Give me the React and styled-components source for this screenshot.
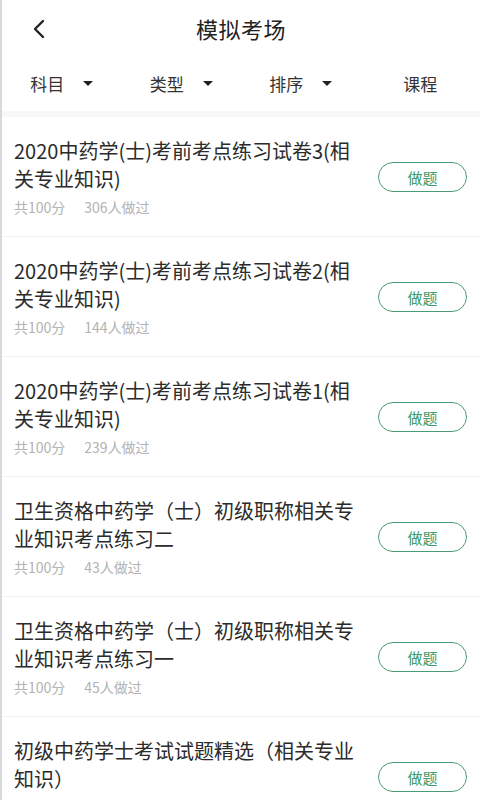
import styled, { createGlobalStyle } from 'styled-components';

const GlobalStyle = createGlobalStyle`
  html, body {
    margin: 0;
    padding: 0;
    background: #ffffff;
  }
  body {
    font-family: "Noto Sans CJK SC", "Noto Sans", sans-serif;
  }
`;

const Page = styled.div`
  width: 480px;
  height: 800px;
  overflow: hidden;
  box-sizing: border-box;
  border-left: 2px solid #d9d9d9;
  background: #ffffff;
`;

const Header = styled.div`
  display: flex;
  align-items: center;
  justify-content: center;
  position: relative;
  height: 56px;
`;

const BackButton = styled.div`
  position: absolute;
  left: 26px;
  top: 18px;
  width: 22px;
  height: 22px;
  display: flex;
  align-items: center;
  justify-content: center;
`;

const Title = styled.h1`
  margin: 0;
  font-size: 22px;
  font-weight: 400;
  color: #222;
  letter-spacing: 0.5px;
`;

const FilterBar = styled.div`
  display: flex;
  height: 55px;
  align-items: center;
  border-bottom: 6px solid #f7f7f7;
`;

const FilterItem = styled.div`
  flex: 1;
  display: flex;
  align-items: center;
  justify-content: center;
  font-size: 17px;
  color: #333;
`;

const Caret = styled.span`
  margin-left: 19px;
  width: 0;
  height: 0;
  border-left: 5px solid transparent;
  border-right: 5px solid transparent;
  border-top: 5px solid #222;
`;

const List = styled.div`
  display: flex;
  flex-direction: column;
`;

const Item = styled.div`
  display: flex;
  align-items: center;
  justify-content: space-between;
  padding: 20px 13px 19px 12px;
  border-bottom: 1px solid #f3f3f3;
`;

const Info = styled.div`
  width: 346px;
`;

const ItemTitle = styled.div`
  font-size: 20px;
  line-height: 28px;
  color: #2b2b2b;
`;

const Meta = styled.div`
  margin-top: 4px;
  display: flex;
  gap: 19px;
  font-size: 14px;
  line-height: 20px;
  color: #b3b3b3;
`;

const DoButton = styled.button`
  width: 89px;
  height: 30px;
  border: 1.5px solid #4a9c74;
  border-radius: 15px;
  background: #fff;
  color: #3f9a6c;
  font-family: inherit;
  font-size: 15px;
  padding: 0;
  cursor: pointer;
`;

const filters = [
  { label: '科目', caret: true },
  { label: '类型', caret: true },
  { label: '排序', caret: true },
  { label: '课程', caret: false },
];

const exams = [
  { title: '2020中药学(士)考前考点练习试卷3(相关专业知识)', count: 306 },
  { title: '2020中药学(士)考前考点练习试卷2(相关专业知识)', count: 144 },
  { title: '2020中药学(士)考前考点练习试卷1(相关专业知识)', count: 239 },
  { title: '卫生资格中药学（士）初级职称相关专业知识考点练习二', count: 43 },
  { title: '卫生资格中药学（士）初级职称相关专业知识考点练习一', count: 45 },
  { title: '初级中药学士考试试题精选（相关专业知识）', count: 52 },
];

const App = () => {
  return (
    <>
      <GlobalStyle />
      <Page>
        <Header>
          <BackButton>
            <svg width="14" height="20" viewBox="0 0 14 20">
              <polyline
                points="11,2 3,10 11,18"
                fill="none"
                stroke="#222"
                strokeWidth="2.4"
                strokeLinecap="round"
                strokeLinejoin="round"
              />
            </svg>
          </BackButton>
          <Title>模拟考场</Title>
        </Header>

        <FilterBar>
          {filters.map((f) => (
            <FilterItem key={f.label}>
              {f.label}
              {f.caret && <Caret />}
            </FilterItem>
          ))}
        </FilterBar>

        <List>
          {exams.map((e) => (
            <Item key={e.title}>
              <Info>
                <ItemTitle>{e.title}</ItemTitle>
                <Meta>
                  <span>共100分</span>
                  <span>{e.count}人做过</span>
                </Meta>
              </Info>
              <DoButton>做题</DoButton>
            </Item>
          ))}
        </List>
      </Page>
    </>
  );
};

export default App;
